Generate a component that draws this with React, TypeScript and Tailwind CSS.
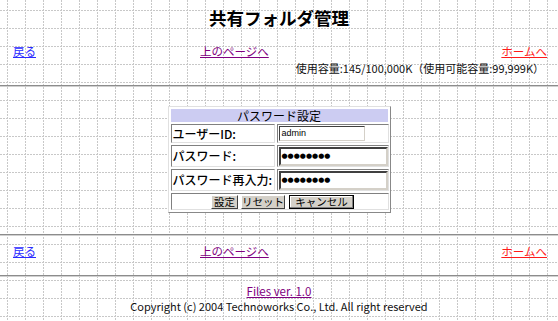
const gridBg =
  "bg-white bg-[image:conic-gradient(from_270deg_at_1px_2px,#c8c8c8_25%,transparent_0),conic-gradient(from_270deg_at_2px_1px,#c8c8c8_25%,transparent_0)] bg-[length:18px_3px,3px_18px] bg-[position:7px_0,0_10px]";

const cell =
  "border border-t-[#808080] border-l-[#808080] border-b-[#e0e0e0] border-r-[#e0e0e0]";

const btn =
  "h-[14px] whitespace-nowrap bg-[#d4d0c8] text-[10.5px] leading-[12px]";

function Rule() {
  return <div className="h-[2px] w-full border-t border-b border-t-[#8c8c8c] border-b-[#d0d0d0]" />;
}

function NavRow({ withUsage }: { withUsage?: boolean }) {
  return (
    <div className="flex items-start pl-[13px] pr-[11px] text-[11.5px] leading-[14px]">
      <a href="#" className="w-[187px] text-[#2a2aff] underline">戻る</a>
      <a href="#" className="text-[#800080] underline">上のページへ</a>
      <div className="ml-auto flex flex-col items-end">
        <a href="#" className="text-[#ff1a1a] underline">ホームへ</a>
        {withUsage && (
          <span className="mt-[3px] mr-[3px] text-[11px] text-[#111]">
            使用容量:145/100,000K（使用可能容量:99,999K）
          </span>
        )}
      </div>
    </div>
  );
}

function PasswordBox() {
  return (
    <div className="flex h-[19px] w-[109px] items-center border-2 border-t-[#404040] border-l-[#404040] border-b-[#d4d0c8] border-r-[#d4d0c8] bg-white pl-[1px] font-['DejaVu_Sans'] text-[7px] leading-none">
      ●●●●●●●●
    </div>
  );
}

export default function App() {
  return (
    <div className={`min-h-screen w-full ${gridBg} font-['Noto_Sans_CJK_JP',sans-serif] text-black`}>
      <h1 className="pt-[7px] text-center text-[17.5px] font-bold leading-[22px]">共有フォルダ管理</h1>

      <div className="mt-[15px]">
        <NavRow withUsage />
      </div>

      <div className="mt-[10px]">
        <Rule />
      </div>

      <div className="mx-auto mt-[19px] w-[223px] border border-t-[#e0e0e0] border-l-[#e0e0e0] border-b-[#888] border-r-[#888] bg-white p-[2px] text-[12px]">
        <div className="h-[13px] bg-[#ccccf2] text-center leading-[13px]">パスワード設定</div>

        <div className="mt-[2px] grid grid-cols-[104px_1fr] gap-[2px]">
          <div className={`${cell} flex h-[19px] items-center pl-[1px] font-medium`}>ユーザーID:</div>
          <div className={`${cell} flex items-center pl-[1px]`}>
            <div className="flex h-[15px] w-[86px] items-center border border-t-[#404040] border-l-[#404040] border-b-[#d4d0c8] border-r-[#d4d0c8] bg-white pl-[2px] font-['Liberation_Sans'] text-[9px]">
              admin
            </div>
          </div>

          <div className={`${cell} flex h-[22px] items-center pl-[1px] font-medium`}>パスワード:</div>
          <div className={`${cell} flex items-center pl-[1px]`}>
            <PasswordBox />
          </div>

          <div className={`${cell} flex h-[22px] items-center pl-[1px] font-medium`}>パスワード再入力:</div>
          <div className={`${cell} flex items-center pl-[1px]`}>
            <PasswordBox />
          </div>

          <div className={`${cell} col-span-2 flex h-[17px] items-center justify-center gap-[3px] pl-[6px]`}>
            <button className={`${btn} w-[27px] border border-t-white border-l-white border-b-[#404040] border-r-[#404040]`}>
              設定
            </button>
            <button className={`${btn} w-[44px] border border-t-white border-l-white border-b-[#404040] border-r-[#404040]`}>
              リセット
            </button>
            <button className={`${btn} ml-[1px] w-[65px] border border-black shadow-[inset_-1px_-1px_0_#808080,inset_1px_1px_0_#fff]`}>
              キャンセル
            </button>
          </div>
        </div>
      </div>

      <div className="mt-[21px]">
        <Rule />
      </div>

      <div className="mt-[8px]">
        <NavRow />
      </div>

      <div className="mt-[17px]">
        <Rule />
      </div>

      <div className="mt-[7px] text-center text-[11.5px] leading-[14px]">
        <a href="#" className="text-[#800080] underline">Files ver. 1.0</a>
      </div>
      <p className="mt-[1px] text-center text-[11px] leading-[14px] text-[#111]">
        Copyright (c) 2004 Technoworks Co., Ltd. All right reserved
      </p>
    </div>
  );
}
